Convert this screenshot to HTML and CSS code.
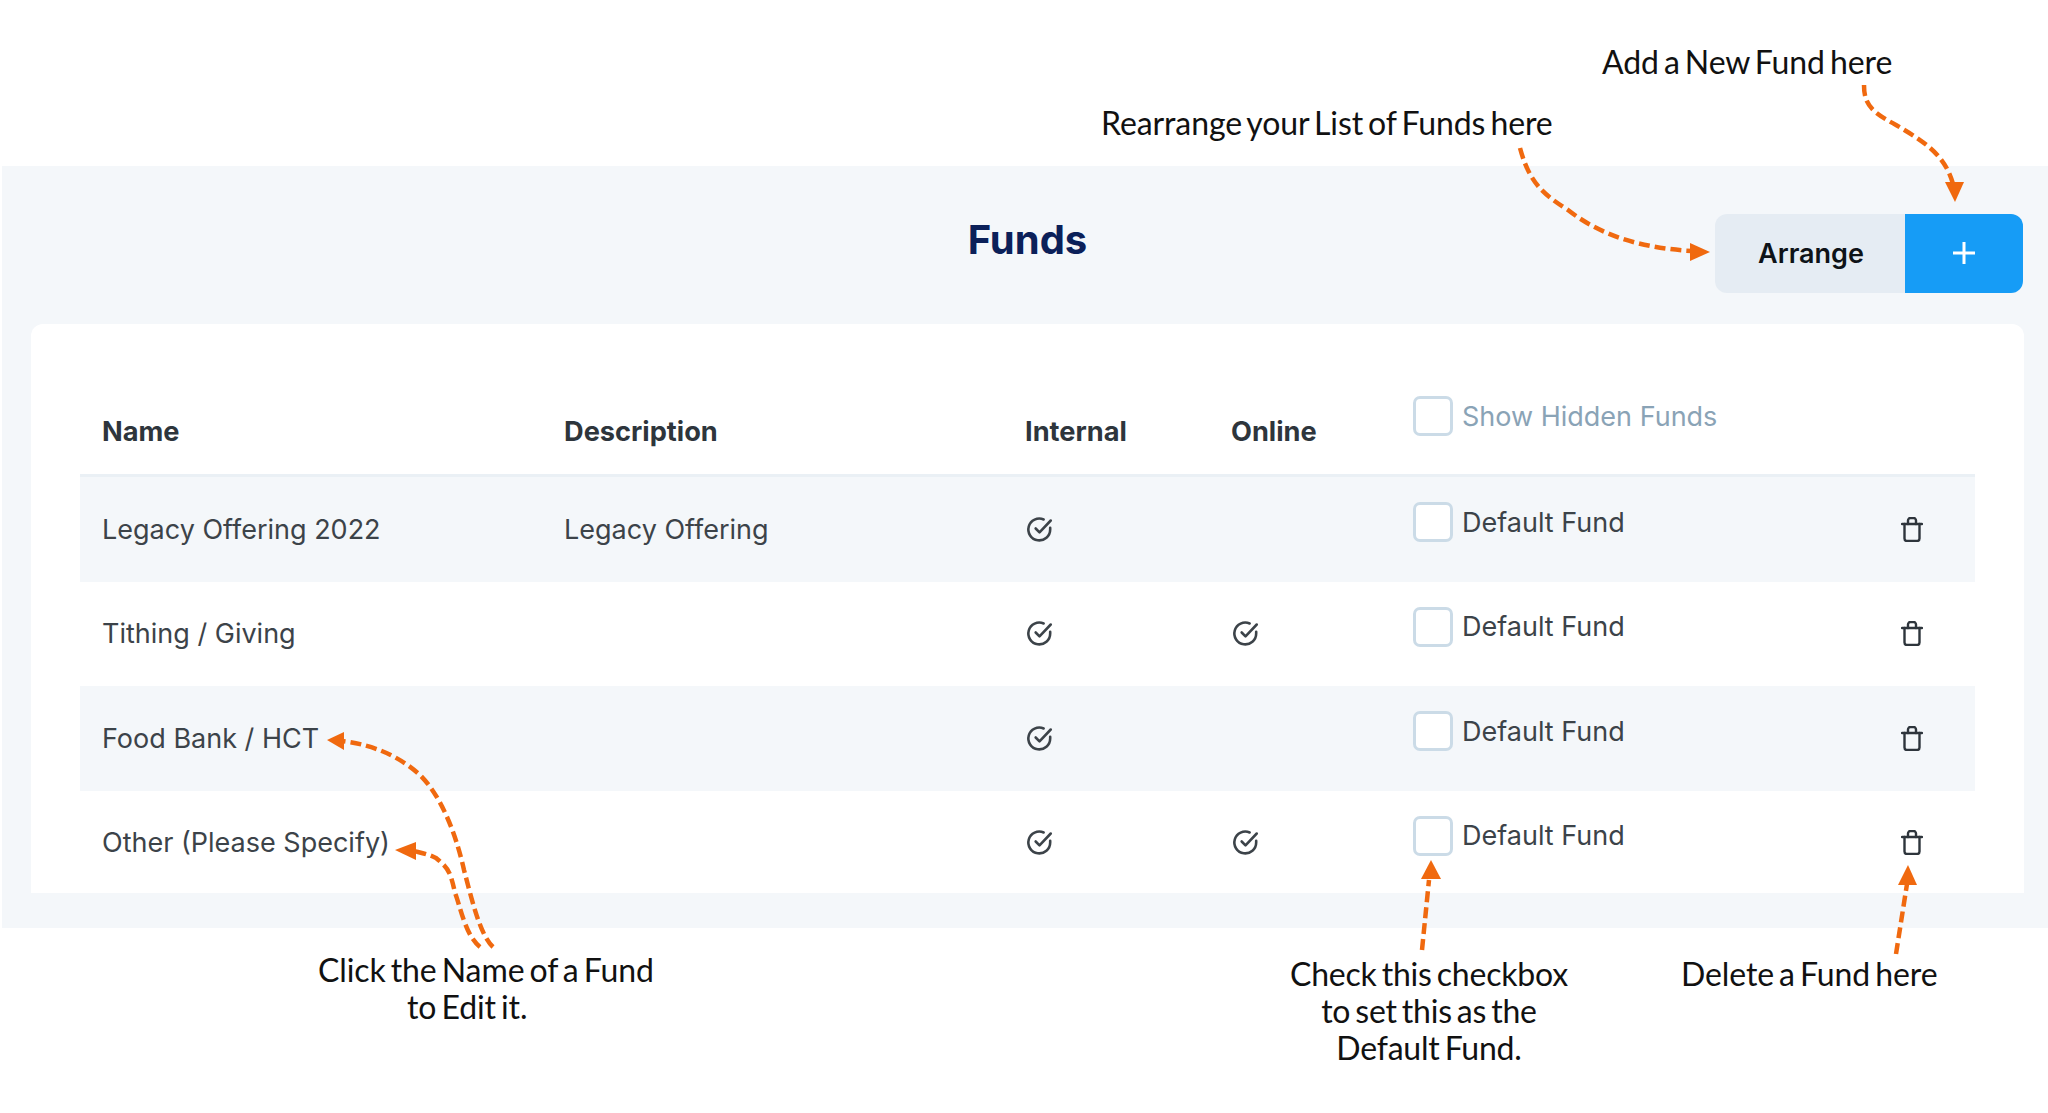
FILE: index.html
```html
<!DOCTYPE html>
<html>

<head>
    <title>Funds</title>
    <meta name="viewport" content="width=device-width, initial-scale=1.0">
    <link rel="stylesheet" href="styles.css">
</head>

<body>

    <svg width="0" height="0" class="defs">
        <symbol id="icon-check" viewBox="0 0 24 24">
            <path d="M21.5 10.5V12a9.7 9.7 0 1 1-5.8-8.9"></path>
            <path d="M22 4L12 14.5l-3.4-3.4"></path>
        </symbol>
        <symbol id="icon-trash" viewBox="0 0 22 25">
            <path d="M1 7h20"></path>
            <path d="M3.5 7v14.5a2.5 2.5 0 0 0 2.5 2.5h10a2.5 2.5 0 0 0 2.5-2.5V7"></path>
            <path d="M7 7V3.5A2.5 2.5 0 0 1 9.500 1h3A2.500 2.500 0 0 1 15 3.500V7"></path>
        </symbol>
    </svg>

    <div class="page">
        <div class="panel">
            <div class="top">
                <div></div>
                <h1>Funds</h1>
                <div class="actions">
                    <button class="arrange">Arrange</button>
                    <button class="add">
                        <svg width="22" height="22" viewBox="0 0 22 22"><path d="M11 0v22M0 11h22"></path></svg>
                    </button>
                </div>
            </div>

            <div class="card">
                <!-- header -->
                <div class="row head">
                    <div>Name</div>
                    <div>Description</div>
                    <div>Internal</div>
                    <div>Online</div>
                    <label class="check hidden-funds"><span class="box"></span>Show Hidden Funds</label>
                </div>

                <div class="row shaded">
                    <div>Legacy Offering 2022</div>
                    <div>Legacy Offering</div>
                    <div><svg class="icon"><use href="#icon-check"></use></svg></div>
                    <div></div>
                    <label class="check"><span class="box"></span>Default Fund</label>
                    <svg class="trash"><use href="#icon-trash"></use></svg>
                </div>
                <div class="row">
                    <div>Tithing / Giving</div>
                    <div></div>
                    <div><svg class="icon"><use href="#icon-check"></use></svg></div>
                    <div><svg class="icon"><use href="#icon-check"></use></svg></div>
                    <label class="check"><span class="box"></span>Default Fund</label>
                    <svg class="trash"><use href="#icon-trash"></use></svg>
                </div>
                <div class="row shaded">
                    <div>Food Bank / HCT</div>
                    <div></div>
                    <div><svg class="icon"><use href="#icon-check"></use></svg></div>
                    <div></div>
                    <label class="check"><span class="box"></span>Default Fund</label>
                    <svg class="trash"><use href="#icon-trash"></use></svg>
                </div>
                <div class="row">
                    <div>Other (Please Specify)</div>
                    <div></div>
                    <div><svg class="icon"><use href="#icon-check"></use></svg></div>
                    <div><svg class="icon"><use href="#icon-check"></use></svg></div>
                    <label class="check"><span class="box"></span>Default Fund</label>
                    <svg class="trash"><use href="#icon-trash"></use></svg>
                </div>
            </div>
        </div>

        <!-- annotations on top of the screenshot -->
        <svg class="arrows" width="2048" height="1113" viewBox="0 0 2048 1113">
            <g class="dash">
                <path d="M1864 85C1864 105 1872 112 1896 125C1925 142 1945 155 1953 184"></path>
                <path d="M1520 148C1530 185 1545 195 1568 210C1600 235 1640 248 1692 251"></path>
                <path d="M493 947C480 935 472 900 464 870C455 830 440 795 420 775C400 757 375 745 342 741"></path>
                <path d="M480 947C465 935 460 905 455 893C450 870 448 868 436 858C428 854 422 853 414 851"></path>
                <path d="M1422 950L1429 880"></path>
                <path d="M1896 954L1907 884"></path>
            </g>
            <g class="heads">
                <polygon points="1955,202 1945,182 1964,182"></polygon>
                <polygon points="1710,252 1690,243 1690,261"></polygon>
                <polygon points="327,740 344,732 344,750"></polygon>
                <polygon points="395,850 416,842 416,860"></polygon>
                <polygon points="1431,860 1421,879 1441,879"></polygon>
                <polygon points="1908,865 1898,885 1917,885"></polygon>
            </g>
        </svg>
        <div class="note note-add">Add a New Fund here</div>
        <div class="note note-arrange">Rearrange your List of Funds here</div>
        <div class="note note-edit">Click the Name of a Fund<br><span class="edit-line">to Edit it.</span></div>
        <div class="note note-default">Check this checkbox<br>to set this as the<br>Default Fund.</div>
        <div class="note note-delete">Delete a Fund here</div>
    </div>

</body>

</html>
```

FILE: styles.css
```css
body {
    margin: 0;
    background: white;
    font-family: "Inter", sans-serif;
    overflow: hidden;
}

.defs {
    display: block;
    height: 0;
}

.page {
    position: relative;
    height: 1113px;
    padding-top: 166px;
    box-sizing: border-box;
}

.panel {
    margin-left: 2px;
    height: 762px;
    background: #f4f7fa;
}

.top {
    display: grid;
    grid-template-columns: 1fr auto 1fr;
    height: 158px;
    padding-left: 30px;
    padding-right: 25px;
}

h1 {
    margin: 50px 0 0;
    font-size: 40px;
    line-height: 48px;
    font-weight: 700;
    color: #0b2059;
}

.actions {
    display: flex;
    justify-content: flex-end;
    margin-top: 48px;
    height: 79px;
}

button {
    border: none;
    height: 79px;
    font-family: inherit;
}

.arrange {
    width: 190px;
    padding-left: 8px;
    background: #e5ecf3;
    border-radius: 12px 0 0 12px;
    font-size: 27px;
    font-weight: 600;
    color: #0e1318;
}

.add {
    width: 118px;
    background: #169cf6;
    border-radius: 0 12px 12px 0;
    display: flex;
    align-items: center;
    justify-content: center;
    padding-bottom: 2px;
}

.add path {
    stroke: white;
    stroke-width: 3;
    fill: none;
}

.card {
    margin: 0 24px 0 29px;
    height: 569px;
    padding: 0 49px;
    background: white;
    border-radius: 12px 12px 0 0;
    overflow: hidden;
}

.row {
    display: grid;
    grid-template-columns: 462px 461px 206px 182px 488px 1fr;
    align-items: center;
    height: 104.5px;
    padding-left: 22px;
    box-sizing: border-box;
    font-size: 27px;
    color: #3c4349;
}

.row.head {
    height: 153px;
    padding-top: 64px;
    font-weight: 700;
    font-size: 27.2px;
    color: #2e353c;
    border-bottom: 3px solid #eaf0f5;
}

.row.shaded {
    background: #f4f7fa;
}

.check {
    display: flex;
    align-items: center;
    gap: 9px;
    margin-bottom: 14px;
}

.hidden-funds {
    margin-bottom: 30px;
    font-weight: 400;
    font-size: 27px;
    color: #8aa3b6;
}

.box {
    width: 40px;
    height: 40px;
    box-sizing: border-box;
    border: 3.5px solid #cbdbe7;
    border-radius: 7px;
    background: white;
}

.icon {
    display: block;
    width: 27px;
    height: 27px;
    margin-left: 1px;
    fill: none;
    stroke: #3c4349;
    stroke-width: 2.3;
    stroke-linecap: round;
    stroke-linejoin: round;
}

.trash {
    display: block;
    width: 22px;
    height: 25px;
    fill: none;
    stroke: #2e353c;
    stroke-width: 2.4;
    stroke-linecap: round;
    stroke-linejoin: round;
}

.arrows {
    position: absolute;
    left: 0;
    top: 0;
    pointer-events: none;
}

.dash path {
    fill: none;
    stroke: #f0690f;
    stroke-width: 4.5;
    stroke-dasharray: 11 5;
}

.heads polygon {
    fill: #f0690f;
}

.note {
    position: absolute;
    font-family: "Lato", sans-serif;
    font-size: 32px;
    line-height: 37px;
    letter-spacing: -0.1px;
    word-spacing: -3px;
    color: #111;
    white-space: nowrap;
}

.note-add {
    left: 1602px;
    top: 43px;
}

.note-arrange {
    left: 1101px;
    top: 104px;
}

.note-edit {
    left: 318px;
    top: 951px;
}

.edit-line {
    margin-left: 89px;
}

.note-default {
    left: 1229px;
    width: 400px;
    top: 955px;
    text-align: center;
    letter-spacing: -0.2px;
}

.note-delete {
    left: 1681px;
    top: 955px;
}
```
